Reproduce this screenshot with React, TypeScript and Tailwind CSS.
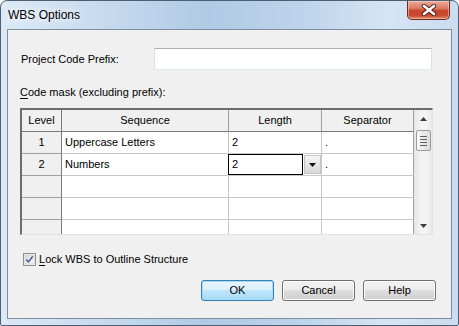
import React from "react";

const font = { fontFamily: "'Liberation Sans', Arial, sans-serif" };

function Checkbox() {
  return (
    <svg width="13" height="13" viewBox="0 0 13 13">
      <defs>
        <linearGradient id="cbg" x1="0" y1="0" x2="1" y2="1">
          <stop offset="0" stopColor="#d8d8d8" />
          <stop offset="1" stopColor="#fbfbfb" />
        </linearGradient>
      </defs>
      <rect x="0.5" y="0.5" width="12" height="12" fill="#f4f4f4" stroke="#8f8f8f" />
      <rect x="2" y="2" width="9" height="9" fill="url(#cbg)" stroke="#c6c6c6" strokeWidth="0.6" />
      <path d="M3.2 6.4 L5.4 9 L9.8 3.2" fill="none" stroke="#4a64a0" strokeWidth="1.5" strokeLinejoin="round" />
    </svg>
  );
}

function CloseX() {
  return (
    <svg width="16" height="12" viewBox="0 0 16 12">
      <path d="M3 2 L13 10 M13 2 L3 10" stroke="#4a1a12" strokeWidth="4.4" strokeLinecap="round" />
      <path d="M3 2 L13 10 M13 2 L3 10" stroke="#ffffff" strokeWidth="2.6" strokeLinecap="round" />
    </svg>
  );
}

function Row({ level, seq, len, sep, editing }: { level: string; seq: string; len: string; sep: string; editing?: boolean }) {
  return (
    <div className="flex h-[22px] shrink-0">
      <div className="flex w-[40px] items-center justify-center border-b border-r border-b-[#a0a0a0] border-r-[#7a7a7a] bg-[#f0f0f0]">{level}</div>
      <div className="flex w-[167px] items-center border-b border-r border-[#c8c8c8] bg-white pl-[3px]">{seq}</div>
      {editing ? (
        <div className="flex w-[93px] border-b border-r border-[#c8c8c8] bg-white">
          <div className="-ml-px flex h-[21px] w-[75px] items-center border border-black pl-[3px]">{len}</div>
          <div className="mt-px ml-px flex h-[19px] w-[17px] items-center justify-center border border-[#c4c4c4] bg-[linear-gradient(#f6f6f6,#e4e4e4_50%,#d8d8d8)]">
            <svg width="7" height="4" viewBox="0 0 7 4"><path d="M0 0 H7 L3.5 4 Z" fill="#111" /></svg>
          </div>
        </div>
      ) : (
        <div className="flex w-[93px] items-center border-b border-r border-[#c8c8c8] bg-white pl-[3px]">{len}</div>
      )}
      <div className="flex w-[92px] items-center border-b border-r border-[#c8c8c8] border-r-[#a0a0a0] bg-white pl-[3px]">{sep}</div>
    </div>
  );
}

function Scrollbar() {
  return (
    <div className="flex w-[18px] flex-col items-center bg-[linear-gradient(to_right,#e6e6e6,#f4f4f4_40%,#f4f4f4_70%,#e8e8e8)]">
      <div className="flex h-[17px] w-full items-center justify-center">
        <svg width="7" height="4" viewBox="0 0 7 4"><path d="M0 4 H7 L3.5 0 Z" fill="#3c3c3c" /></svg>
      </div>
      <div className="mt-[3px] flex h-[21px] w-[15px] flex-col items-center justify-center gap-[2px] rounded-[2px] border border-[#9b9b9b] bg-[linear-gradient(to_right,#fbfbfb,#e9e9e9_50%,#dcdcdc)]">
        <div className="h-px w-[7px] bg-[#606060]" />
        <div className="h-px w-[7px] bg-[#606060]" />
        <div className="h-px w-[7px] bg-[#606060]" />
        <div className="h-px w-[7px] bg-[#606060]" />
      </div>
      <div className="flex-1" />
      <div className="flex h-[14px] w-full items-start justify-center pt-[4px]">
        <svg width="7" height="4" viewBox="0 0 7 4"><path d="M0 0 H7 L3.5 4 Z" fill="#3c3c3c" /></svg>
      </div>
    </div>
  );
}

function Btn({ label, focused }: { label: string; focused?: boolean }) {
  return (
    <div
      className={
        "flex h-[21px] w-[73px] items-center justify-center rounded-[3px] border " +
        (focused
          ? "border-[#3c7fb1] bg-[linear-gradient(#eaf6fd,#d9f0fc_50%,#bee6fd_50%,#a7d9f5)] shadow-[inset_0_0_0_1px_#9fdcfb]"
          : "border-[#707070] bg-[linear-gradient(#f2f2f2,#ebebeb_50%,#dddddd_50%,#cfcfcf)] shadow-[inset_0_0_0_1px_#fcfcfc]")
      }
    >
      {label}
    </div>
  );
}

export default function App() {
  return (
    <div
      style={font}
      className="flex h-[326px] w-[459px] flex-col overflow-hidden rounded-t-[7px] rounded-b-[2px] border border-[#4f5f73] bg-[linear-gradient(to_right,#dce9f6,#c4d9ee_25%,#b0cae5_45%,#bcd3eb_65%,#d6e5f4_85%,#cadcef)] text-[11px] text-black"
    >
      <div className="flex h-[28px] shrink-0 items-start justify-between pl-[7px] pr-[8px]">
        <div className="pt-[6px] text-[12px] leading-[16px] [text-shadow:0_0_6px_#ffffff,0_0_10px_#ffffff]">WBS Options</div>
        <div className="flex h-[19px] w-[43px] items-center justify-center rounded-b-[5px] border border-t-0 border-[#6e2a1e] bg-[linear-gradient(#e9ab9c,#dc7b64_40%,#c8432a_55%,#c94a2f_80%,#e08a6e)] shadow-[inset_0_0_0_1px_rgba(255,220,210,0.5)]">
          <CloseX />
        </div>
      </div>
      <div className="mx-[6px] mb-[6px] flex flex-1 flex-col border border-[#7f8e9f] bg-[#f0f0f0] pl-[12px] pr-[15px]">
        <div className="mt-[18px] flex items-center">
          <div className="w-[134px] pl-px">Project Code Prefix:</div>
          <div className="h-[22px] w-[278px] border border-[#dbdfe6] border-t-[#abadb3] border-b-[#e3e9ef] bg-white" />
        </div>
        <div className="mt-[15px] leading-[15px]">
          <span className="underline underline-offset-2">C</span>ode mask (excluding prefix):
        </div>
        <div className="mt-[8px] flex h-[127px] w-[413px] border-b border-l-2 border-r border-t-2 border-b-[#e3e3e3] border-l-[#6d6d6d] border-r-[#e3e3e3] border-t-[#6d6d6d] bg-[#f0f0f0]">
          <div className="flex w-[392px] flex-col overflow-hidden">
            <div className="flex h-[22px] shrink-0 bg-[#f0f0f0]">
              <div className="flex w-[40px] items-center justify-center border-b border-r border-b-[#7a7a7a] border-r-[#7a7a7a]">Level</div>
              <div className="flex w-[167px] items-center justify-center border-b border-r border-b-[#7a7a7a] border-r-[#a0a0a0]">Sequence</div>
              <div className="flex w-[93px] items-center justify-center border-b border-r border-b-[#7a7a7a] border-r-[#a0a0a0]">Length</div>
              <div className="flex w-[92px] items-center justify-center border-b border-r border-b-[#7a7a7a] border-r-[#a0a0a0]">Separator</div>
            </div>
            <Row level="1" seq="Uppercase Letters" len="2" sep="." />
            <Row level="2" seq="Numbers" len="2" sep="." editing />
            <Row level="" seq="" len="" sep="" />
            <Row level="" seq="" len="" sep="" />
            <Row level="" seq="" len="" sep="" />
          </div>
          <Scrollbar />
        </div>
        <div className="mt-[17px] flex items-center pl-[3px]">
          <Checkbox />
          <div className="ml-[3px] leading-[15px]">
            <span className="underline underline-offset-2">L</span>ock WBS to Outline Structure
          </div>
        </div>
        <div className="mt-[13px] flex justify-end gap-[8px]">
          <Btn label="OK" focused />
          <Btn label="Cancel" />
          <Btn label="Help" />
        </div>
      </div>
    </div>
  );
}
